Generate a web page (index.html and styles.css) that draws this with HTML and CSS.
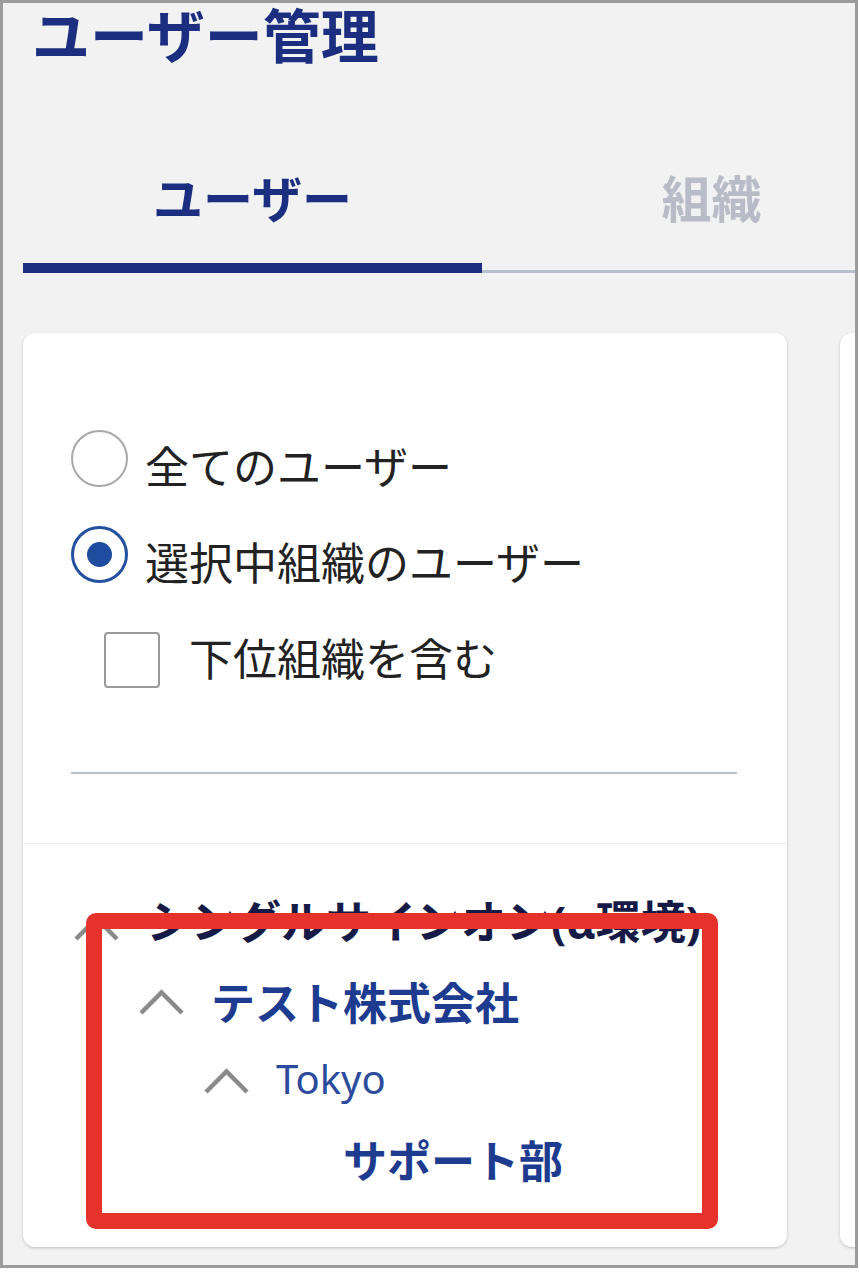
FILE: index.html
```html
<!DOCTYPE html>
<html lang="ja">
<head>
<meta charset="utf-8">
<title>ユーザー管理</title>
<link rel="stylesheet" href="styles.css">
</head>
<body>
<div class="frame">
  <h1 class="title">ユーザー管理</h1>
  <div class="tabs">
    <div class="tab active">ユーザー</div>
    <div class="tab">組織</div>
  </div>
  <div class="panels">
    <div class="card">
      <div class="filters">
        <div class="radio-row"><span class="radio"></span><span class="opt">全てのユーザー</span></div>
        <div class="radio-row second"><span class="radio checked"></span><span class="opt">選択中組織のユーザー</span></div>
        <div class="check-row"><span class="checkbox"></span><span class="opt">下位組織を含む</span></div>
        <div class="divider"></div>
      </div>
      <div class="tree">
        <div class="node lvl0">
          <svg class="chev" viewBox="0 0 47 27"><polyline points="3,24 23.5,3.5 44,24"/></svg>
          <span class="name root">シングルサインオン(α環境)</span>
        </div>
        <div class="node lvl1">
          <svg class="chev" viewBox="0 0 47 27"><polyline points="3,24 23.5,3.5 44,24"/></svg>
          <span class="name company">テスト株式会社</span>
        </div>
        <div class="node lvl2">
          <svg class="chev" viewBox="0 0 47 27"><polyline points="3,24 23.5,3.5 44,24"/></svg>
          <span class="name city">Tokyo</span>
        </div>
        <div class="node lvl3">
          <span class="chev-space"></span>
          <span class="name dept">サポート部</span>
        </div>
      </div>
      <div class="highlight"></div>
    </div>
    <div class="card card-next"></div>
  </div>
</div>
</body>
</html>
```
FILE: styles.css
```css
* { box-sizing: border-box; }
html, body { margin: 0; padding: 0; background: #ffffff; }
body { font-family: "Noto Sans CJK JP", "Noto Sans", sans-serif; }

.frame {
  width: 858px;
  height: 1268px;
  border: 3px solid #9b9b9b;
  background: #f2f2f2;
  overflow: hidden;
  padding-left: 20px;
}

.title {
  margin: 0 0 0 9px;
  font-size: 58px;
  line-height: 60px;
  font-weight: 700;
  color: #1b2e80;
  white-space: nowrap;
}

.tabs {
  display: flex;
  width: 918px;
  height: 210px;
}
.tab {
  flex: none;
  width: 459px;
  padding-top: 103px;
  font-size: 50px;
  line-height: 60px;
  font-weight: 700;
  text-align: center;
  color: #b7bcc7;
  border-bottom: 3px solid #b9c0cc;
}
.tab.active {
  color: #1b2e80;
  border-bottom: 10px solid #1b2e80;
}

.panels {
  display: flex;
  gap: 53px;
  margin-top: 60px;
  width: 1200px;
}
.card {
  position: relative;
  flex: none;
  width: 764px;
  height: 914px;
  background: #ffffff;
  border-radius: 12px;
  box-shadow: 0 1px 3px rgba(0, 0, 0, 0.22);
}
.card-next { width: 300px; }

.filters {
  padding: 97px 50px 69px 48px;
  border-bottom: 1px solid #efefef;
}
.radio-row {
  display: flex;
  align-items: flex-start;
  height: 57px;
}
.radio-row.second { margin-top: 39px; }
.radio {
  flex: none;
  width: 57px;
  height: 57px;
  border: 2px solid #a8a8a8;
  border-radius: 50%;
}
.radio.checked {
  display: flex;
  align-items: center;
  justify-content: center;
  border: 3px solid #2450a0;
}
.radio.checked::after {
  content: "";
  width: 25px;
  height: 25px;
  border-radius: 50%;
  background: #1f4c9e;
}
.opt {
  font-size: 44px;
  line-height: 56px;
  color: #222222;
  white-space: nowrap;
}
.radio-row .opt { margin-left: 17px; margin-top: 7px; }

.check-row {
  display: flex;
  align-items: flex-start;
  margin-top: 49px;
  padding-left: 33px;
  height: 56px;
}
.checkbox {
  flex: none;
  width: 56px;
  height: 56px;
  border: 2px solid #9a9a9a;
  border-radius: 4px;
}
.check-row .opt { margin-left: 29px; margin-top: -3px; }

.divider {
  margin-top: 84px;
  height: 2px;
  background: #b9c0cc;
}

.tree { padding-top: 40px; }
.node {
  display: flex;
  align-items: center;
  height: 79px;
  font-family: "Noto Sans", "Noto Sans CJK JP", sans-serif;
  white-space: nowrap;
}
.lvl0 { padding-left: 50px; }
.lvl1 { padding-left: 115px; }
.lvl2 { padding-left: 180px; }
.lvl3 { padding-left: 245px; }
.chev {
  flex: none;
  width: 47px;
  height: 27px;
  margin-right: 26px;
}
.lvl0 .chev { margin-top: 10px; }
.lvl0 .name { margin-bottom: 4px; }
.chev polyline {
  fill: none;
  stroke: #8a8a8a;
  stroke-width: 4.5;
}
.chev-space {
  flex: none;
  width: 47px;
  height: 27px;
  margin-right: 28px;
}
.name {
  font-size: 44px;
  line-height: 1;
  font-weight: 700;
}
.name.root { color: #151b46; font-size: 45px; }
.name.company { color: #1d3b8f; }
.name.city { font-size: 40px; font-weight: 400; color: #2b4b9c; margin-bottom: 6px; }
.name.dept { color: #1d3b8f; }

.highlight {
  position: absolute;
  left: 63px;
  top: 580px;
  width: 632px;
  height: 316px;
  border: 16px solid #e5322a;
  border-radius: 10px;
}
```
